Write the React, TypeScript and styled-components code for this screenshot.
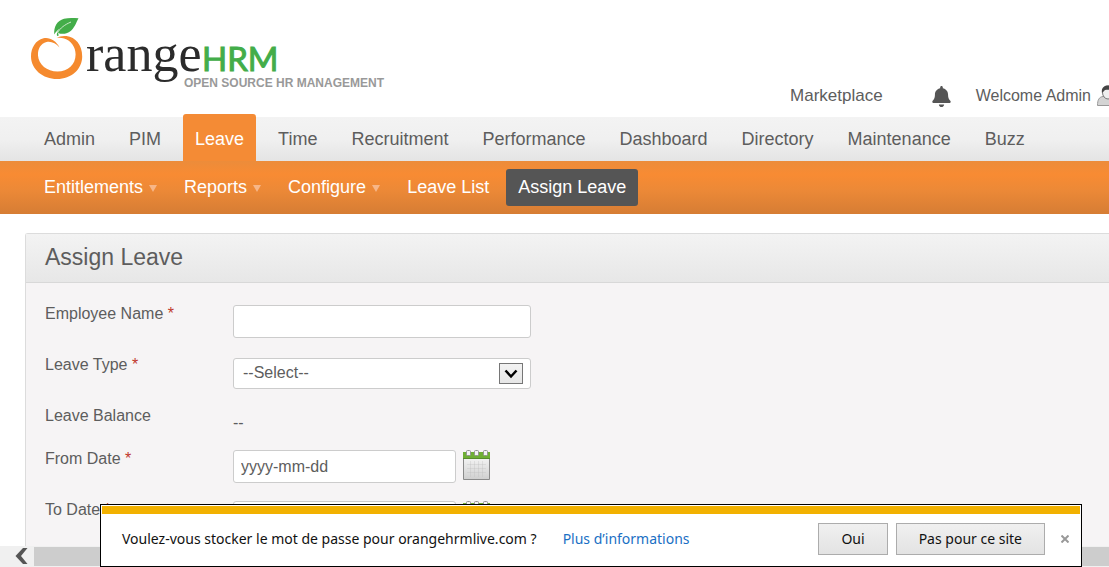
import React from 'react';
import styled, { createGlobalStyle } from 'styled-components';
import { FaBell } from 'react-icons/fa';

const GlobalStyle = createGlobalStyle`
  *, *::before, *::after { box-sizing: border-box; }
  body {
    margin: 0;
    background: #fff;
    color: #5d5d5d;
    font: 16px/18px "Liberation Sans", Arial, sans-serif;
    overflow: hidden;
  }
  button, input, select { font: inherit; color: inherit; }
  a { color: inherit; text-decoration: none; }
  ul { margin: 0; padding: 0; list-style: none; }
`;

const Page = styled.div`
  display: flex;
  flex-direction: column;
  height: 100vh;
  overflow: hidden;
`;

const Header = styled.header`
  display: flex;
  flex: none;
  align-items: flex-end;
  justify-content: space-between;
  height: 117px;
  padding-left: 24px;
`;

const LogoLink = styled.a`
  align-self: flex-start;
  padding-top: 8px;
  svg { display: block; }
`;

const Tools = styled.div`
  display: flex;
  align-items: center;
  height: 24px;
  margin-bottom: 9px;
  margin-right: -10px;
  white-space: nowrap;
`;

const Marketplace = styled.a`
  margin-right: 48px;
  font-size: 17px;
`;

const BellButton = styled.button`
  display: flex;
  margin-right: 24px;
  padding: 0;
  border: 0;
  background: none;
`;

const Welcome = styled.a`
  display: flex;
  align-items: center;
  gap: 6px;
`;

const MainNav = styled.nav`
  flex: none;
  height: 44px;
  padding-left: 32px;
  background: linear-gradient(#f3f3f3, #f0f0f0 50%, #e4e4e4);
`;

const MainList = styled.ul`
  display: flex;
  align-items: flex-end;
  gap: 10px;
  height: 44px;
`;

const MainLink = styled.a<{ $active?: boolean }>`
  display: block;
  height: ${p => (p.$active ? 47 : 44)}px;
  padding: ${p => (p.$active ? 3 : 0)}px 12px 0;
  border-radius: 3px 3px 0 0;
  background: ${p => (p.$active ? '#f48b35' : 'transparent')};
  color: ${p => (p.$active ? '#fff' : '#5d5d5d')};
  font-size: 18px;
  line-height: 44px;
  white-space: nowrap;
`;

const SubNav = styled.nav`
  flex: none;
  height: 53px;
  padding: 8px 0 0 32px;
  background: linear-gradient(#ec8c3a, #f88b33 25%, #ec8937 55%, #d67d34);
`;

const SubList = styled.ul`
  display: flex;
  gap: 5px;
`;

const SubLink = styled.a<{ $active?: boolean }>`
  display: flex;
  align-items: center;
  gap: 6px;
  height: 37px;
  padding: 0 12px 2px;
  border-radius: 3px;
  background: ${p => (p.$active ? '#555' : 'transparent')};
  color: #fff;
  font-size: 18px;
  white-space: nowrap;
`;

const Caret = styled.span`
  width: 0;
  height: 0;
  margin: 3px -2px 0 0;
  border: 4px solid transparent;
  border-top: 7px solid #f7b688;
  border-bottom: 0;
`;

const Content = styled.main`
  display: flex;
  flex: 1;
  min-height: 0;
  padding: 19px 0 0 25px;
`;

const Panel = styled.section`
  flex: 1;
  border: 1px solid #dcdcdc;
  border-width: 1px 0 0 1px;
  border-radius: 3px 0 0 0;
  background: #f6f4f5;
`;

const PanelTitle = styled.h1`
  height: 49px;
  margin: 0;
  padding-left: 19px;
  border-bottom: 1px solid #d8d8d8;
  background: linear-gradient(#f3f3f3, #e7e7e7);
  font-size: 23px;
  font-weight: 400;
  line-height: 46px;
`;

const Form = styled.form`
  display: flex;
  flex-direction: column;
  gap: 18px;
  padding: 22px 19px 0;
`;

const Row = styled.div<{ $compact?: boolean }>`
  display: grid;
  grid-template-columns: 188px 1fr;
  height: ${p => (p.$compact ? 25 : 33)}px;
`;

const Label = styled.label`
  line-height: 18px;
`;

const Required = styled.em`
  color: #c0392b;
  font-style: normal;
`;

const Field = styled.div`
  display: flex;
  align-items: flex-end;
  gap: 7px;
`;

const TextInput = styled.input<{ $short?: boolean }>`
  width: ${p => (p.$short ? 223 : 298)}px;
  height: 33px;
  padding: 0 7px;
  border: 1px solid #ccc;
  border-radius: 3px;
  background: #fff;
`;

const SelectBox = styled.div`
  display: grid;
  align-items: center;
  width: 298px;
  > * { grid-area: 1 / 1; }
`;

const Select = styled.select`
  appearance: none;
  width: 100%;
  height: 31px;
  padding: 0 9px 2px;
  border: 1px solid #ccc;
  border-radius: 3px;
  background: #fff;
`;

const SelectArrow = styled.span`
  display: grid;
  place-items: center;
  justify-self: end;
  width: 24px;
  height: 21px;
  margin-right: 8px;
  border: 1px solid #767676;
  background: linear-gradient(#f2f2f2, #e6e6e6);
  pointer-events: none;
`;

const IconButton = styled.button`
  display: flex;
  align-self: flex-start;
  padding: 0;
  border: 0;
  background: none;
`;

const ScrollTrack = styled.div`
  display: flex;
  flex: none;
  align-items: center;
  height: 21px;
  background: #f0f0f0;
`;

const ScrollButton = styled.button`
  display: flex;
  justify-content: flex-end;
  width: 34px;
  padding: 0 6px 2px 0;
  border: 0;
  background: none;
`;

const ScrollThumb = styled.div`
  flex: 1;
  height: 19px;
  background: #cdcdcd;
`;

const Notice = styled.aside`
  position: fixed;
  right: 27px;
  bottom: 0;
  left: 100px;
  padding: 1px;
  border: 1px solid #000;
  background: #fff;
  color: #111;
  font: 14px/20px "Noto Sans", "Open Sans", sans-serif;
`;

const NoticeBar = styled.div`
  height: 8px;
  background: #f2b100;
`;

const NoticeRow = styled.div`
  display: flex;
  align-items: center;
  height: 51px;
  padding: 0 3px 2px 20px;
  white-space: nowrap;
`;

const NoticeLink = styled.a`
  margin: 0 auto 0 26px;
  color: #1a6fc4;
`;

const NoticeButton = styled.button`
  height: 32px;
  margin-right: 8px;
  padding: 0 22px;
  border: 1px solid #acacac;
  background: linear-gradient(#f0f0f0, #e3e3e3);
`;

const CloseButton = styled.button`
  display: flex;
  padding: 8px;
  border: 0;
  background: none;
`;

function Logo() {
  return (
    <svg width="364" height="86" viewBox="24 8 364 86" role="img" aria-label="OrangeHRM">
      <path
        fill="#f58a2e"
        d="M59.500 47.500 C56 40.500 49.500 37 43.500 38.300 C35.500 40.200 31 48 31 56.500 C31.200 69.500 43 79 57 79 C71.500 79 82.200 69.200 82.200 56.500 C82.200 45 75.500 37 66.500 36 C62.500 35.600 59.200 36.300 56.500 37.900 C59.500 37.500 62 37.700 64.200 38.600 C71 40.700 75.600 47 75.600 54.500 C75.600 64.500 68 71.500 57.500 71.500 C47 71.500 38.500 64.500 38 55.500 C37.600 49 40.800 43.300 46.500 42 C51.200 41 55.800 43.200 59.500 47.500 Z"
      />
      <path
        fill="#43ad49"
        d="M54.300 34.500 C53.500 27 57 20.500 64 18.700 C68.500 17.600 73.500 18 78.500 18.200 C76 23 74.500 28 70 31.500 C66.300 34.300 61.500 34.300 58 32.900 L58.800 35.500 L57 36 C56.300 33.800 57.500 31 60 28.500 C57.500 30 55.600 32 54.300 34.500 Z"
      />
      <path d="M57.500 33 C60 28 65 24.500 71 22" fill="none" stroke="#c9e8c8" strokeWidth="1" />
      <text x="86" y="71" fill="#2b2b2b" fontFamily="Liberation Serif, serif" fontSize="52">range</text>
      <text x="202" y="71" fill="#43ad49" stroke="#43ad49" strokeWidth="1" fontFamily="Lato, sans-serif" fontSize="33">HRM</text>
      <text x="184" y="87" fill="#999" fontFamily="Liberation Sans, sans-serif" fontSize="12" fontWeight="700">
        OPEN SOURCE HR MANAGEMENT
      </text>
    </svg>
  );
}

function UserIcon() {
  return (
    <svg width="22" height="22" viewBox="0 0 22 22" aria-hidden="true">
      <path d="M.5 20.500 C.5 15 2 12 6 11.500 L16 11.500 C20 12 21.500 15 21.500 20.500 Z" fill="#d4d4d4" stroke="#999" />
      <ellipse cx="11" cy="7.500" rx="5.500" ry="6.500" fill="#eee" stroke="#777" />
      <path d="M5 8 C4 3 7 .5 11 .5 C15 .5 18 3 17 8 C15 5 12 4 8 5 Z" fill="#444" />
    </svg>
  );
}

function CalendarIcon() {
  return (
    <svg width="28" height="31" viewBox="0 0 28 31" aria-hidden="true">
      <defs>
        <linearGradient id="sheet" x1="0" y1="0" x2="0" y2="1">
          <stop offset="0" stopColor="#fafafa" />
          <stop offset="1" stopColor="#cfcfcf" />
        </linearGradient>
      </defs>
      <path d="M.5 3.500 H26.500 V29.500 H.5 Z" fill="url(#sheet)" stroke="#8a8a8a" />
      <path d="M0 2 H27 V9 H0 Z" fill="#6fae35" />
      <path d="M0 8.500 H27" stroke="#578c2c" />
      <path d="M4 14.500 H23 M4 18.500 H23 M4 22.500 H23 M7.500 11 V27 M11.500 11 V27 M15.500 11 V27 M19.500 11 V27" stroke="#b9b9b9" strokeOpacity=".3" />
      <g fill="#f4f4f4" stroke="#929292">
        <rect x="3.500" y=".5" width="4" height="5" rx="1" />
        <rect x="11.500" y=".5" width="4" height="5" rx="1" />
        <rect x="20.500" y=".5" width="4" height="5" rx="1" />
      </g>
    </svg>
  );
}

const mainItems = ['Admin', 'PIM', 'Leave', 'Time', 'Recruitment', 'Performance', 'Dashboard', 'Directory', 'Maintenance', 'Buzz'];

const subItems = [
  { text: 'Entitlements', menu: true },
  { text: 'Reports', menu: true },
  { text: 'Configure', menu: true },
  { text: 'Leave List' },
  { text: 'Assign Leave', active: true },
];

function DateRow({ id, label, value }: { id: string; label: string; value: string }) {
  return (
    <Row>
      <Label htmlFor={id}>{label} <Required>*</Required></Label>
      <Field>
        <TextInput id={id} $short defaultValue={value} />
        <IconButton type="button" aria-label={`${label} calendar`}><CalendarIcon /></IconButton>
      </Field>
    </Row>
  );
}

export default function App() {
  return (
    <Page>
      <GlobalStyle />
      <Header>
        <LogoLink href="#"><Logo /></LogoLink>
        <Tools>
          <Marketplace href="#">Marketplace</Marketplace>
          <BellButton aria-label="Notifications"><FaBell size={21} color="#555" /></BellButton>
          <Welcome href="#">Welcome Admin <UserIcon /></Welcome>
        </Tools>
      </Header>
      <MainNav>
        <MainList>
          {mainItems.map(item => (
            <li key={item}><MainLink href="#" $active={item === 'Leave'}>{item}</MainLink></li>
          ))}
        </MainList>
      </MainNav>
      <SubNav>
        <SubList>
          {subItems.map(item => (
            <li key={item.text}>
              <SubLink href="#" $active={item.active}>{item.text}{item.menu && <Caret />}</SubLink>
            </li>
          ))}
        </SubList>
      </SubNav>
      <Content>
        <Panel>
          <PanelTitle>Assign Leave</PanelTitle>
          <Form>
            <Row>
              <Label htmlFor="employee">Employee Name <Required>*</Required></Label>
              <Field><TextInput id="employee" /></Field>
            </Row>
            <Row>
              <Label htmlFor="type">Leave Type <Required>*</Required></Label>
              <Field>
                <SelectBox>
                  <Select id="type"><option>--Select--</option></Select>
                  <SelectArrow>
                    <svg width="14" height="10" viewBox="0 0 14 10" aria-hidden="true">
                      <path d="M1.500 1.500 L7 7.500 L12.500 1.500" fill="none" stroke="#000" strokeWidth="2.500" />
                    </svg>
                  </SelectArrow>
                </SelectBox>
              </Field>
            </Row>
            <Row $compact>
              <Label as="span">Leave Balance</Label>
              <Field>--</Field>
            </Row>
            <DateRow id="from" label="From Date" value="yyyy-mm-dd" />
            <DateRow id="to" label="To Date" value="" />
          </Form>
        </Panel>
      </Content>
      <ScrollTrack>
        <ScrollButton aria-label="Scroll left">
          <svg width="13" height="16" viewBox="0 0 13 16" aria-hidden="true">
            <path d="M8 0 H12.500 L6 8 L12.500 16 H8 L.5 8 Z" fill="#555" />
          </svg>
        </ScrollButton>
        <ScrollThumb />
      </ScrollTrack>
      <Notice>
        <NoticeBar />
        <NoticeRow>
          <span>Voulez-vous stocker le mot de passe pour orangehrmlive.com ?</span>
          <NoticeLink href="#">Plus d’informations</NoticeLink>
          <NoticeButton>Oui</NoticeButton>
          <NoticeButton>Pas pour ce site</NoticeButton>
          <CloseButton aria-label="Fermer">
            <svg width="8" height="8" viewBox="0 0 8 8" aria-hidden="true">
              <path d="M.5 .5 L7.500 7.500 M7.500 .5 L.5 7.500" stroke="#999" strokeWidth="2" />
            </svg>
          </CloseButton>
        </NoticeRow>
      </Notice>
    </Page>
  );
}
